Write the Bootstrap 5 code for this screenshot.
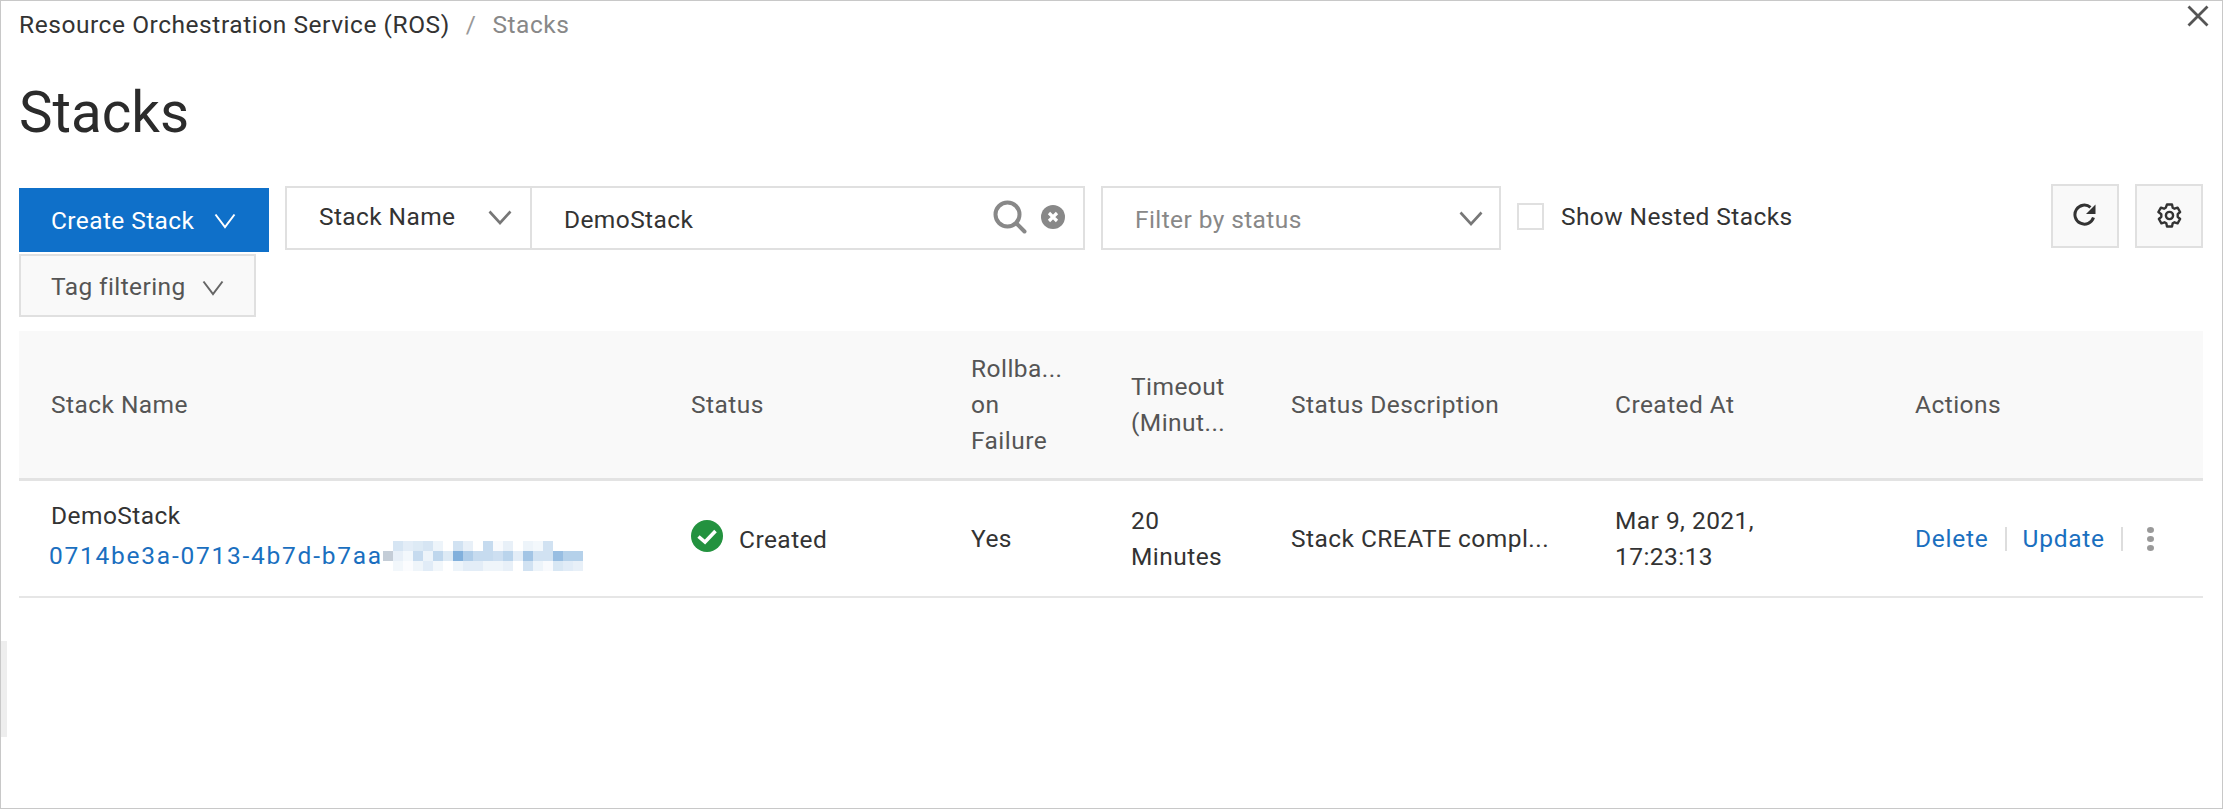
<!DOCTYPE html>
<html><head><meta charset="utf-8"><title>Stacks</title>
<link href="https://cdn.jsdelivr.net/npm/bootstrap@5.3.0/dist/css/bootstrap.min.css" rel="stylesheet">
<style>
html,body{height:100%;background:#fff}
body{font-family:Roboto,"Liberation Sans",sans-serif;font-size:24.5px;color:#333;letter-spacing:.4px}
.shell{height:809px;border:1px solid #c8c8c8;padding:0 19px 0 18px;position:relative;overflow:hidden}
.closer{position:absolute;right:13px;top:4px;line-height:0}
.handle{position:absolute;left:0;top:640px;width:6px;height:96px;background:#eee}
.crumbs{height:47px;margin:0;font-size:24.5px;line-height:47px;letter-spacing:.55px;--bs-breadcrumb-margin-bottom:0;--bs-breadcrumb-item-padding-x:16px}
.crumbs .breadcrumb-item+.breadcrumb-item::before{color:#999}
.crumbs .active{color:#888}
.ttl{font-size:56.5px;line-height:64px;font-weight:400;margin:33px 0 43px;color:#2b2b2b;letter-spacing:0}
.tools{height:143px}
.leftcol{width:250px}
.btnx{border-radius:0;font-size:24.500px;letter-spacing:.4px;display:flex;align-items:center;padding:2px 0 0 32px;gap:17px}
.btncreate{width:250px;height:64px;background:#0f70c9;border:0;color:#fff;margin-bottom:2px;gap:20px}
.btntag{width:237px;height:63px;background:#f9f9f9;border:2px solid #e0e0e0;color:#555;padding:4px 0 0 30px;gap:16px}
.sel{height:64px;border:2px solid #e0e0e0;background:#fff;display:flex;align-items:center}
.grp{width:800px;margin:-2px 0 0 16px}
.grp .nameb{width:245px;height:100%;border-right:2px solid #e0e0e0;padding-left:32px;display:flex;align-items:center;justify-content:space-between;padding-right:18px;padding-bottom:2px}
.grp .val{flex:1;padding-left:32px;padding-top:4px;color:#333}
.grp .ic{display:flex;gap:14px;margin-right:18px;align-items:center;padding-bottom:3px}
.fil{width:400px;margin:-2px 0 0 16px;padding:0 16px 0 32px;justify-content:space-between;color:#888}
.fil span{padding-top:4px}
.chk{margin:15px 0 0 16px;gap:17px;height:27px;align-self:flex-start}
.chk span+span{padding-top:2px}
.box{width:27px;height:27px;border:2px solid #e0e0e0;background:#fff;flex:none}
.sq{width:68px;height:64px;background:#f9f9f9;border:2px solid #e0e0e0;border-radius:0;padding:0 0 2px;display:flex;align-items:center;justify-content:center}
.sqs{margin:-4px 0 0 auto;gap:16px}
table.grid{table-layout:fixed;width:100%;margin:0;--bs-table-bg:transparent;color:#333}
.grid th,.grid td{padding:1px 16px 0 32px;vertical-align:middle;line-height:36px;font-weight:400;letter-spacing:.45px;border-bottom:2px solid #e6e6e6}
.grid thead th{background:#f9f9f9;height:148px;color:#555;border-bottom:3px solid #e3e3e3}
.grid tbody td{height:118px}
.grid tbody td.first{padding-top:0;padding-bottom:4px}
.c1{width:640px}.c2{width:280px}.c3{width:160px}.c4{width:160px}.c5{width:324px}.c6{width:300px}
.trunc{white-space:nowrap;overflow:hidden;text-overflow:ellipsis}
.lnk{color:#1a6fbf;text-decoration:none}
.uid{display:flex;margin:4px 0 0 -2px;align-items:center;height:36px;letter-spacing:1.75px}
.stat{display:flex;align-items:center;gap:16px}
.stat svg{margin-top:-5px}
.stat span{padding-top:3px}
.acts{display:flex;align-items:center}
.acts .lnk{letter-spacing:.75px}
.sep{width:2px;height:24px;background:#ddd;margin:0 16px}
.dots{width:8px;display:flex;flex-direction:column;gap:3px;margin-left:8px}
.dots i{display:block;width:7px;height:6px;border-radius:50%;background:#999}
</style></head><body>
<div class="shell">
<a class="closer" href="#" aria-label="Close"><svg width="22" height="22" viewBox="0 0 22 22"><path d="M1.500 1.500 20.500 20.500M20.500 1.500 1.500 20.500" stroke="#555" stroke-width="2.800" fill="none"/></svg></a>
<div class="handle"></div>
<nav><ol class="breadcrumb crumbs"><li class="breadcrumb-item"><a class="text-reset text-decoration-none" href="#">Resource Orchestration Service (ROS)</a></li><li class="breadcrumb-item active">Stacks</li></ol></nav>
<h1 class="ttl">Stacks</h1>
<div class="tools d-flex align-items-start">
<div class="leftcol">
<button class="btn btnx btncreate">Create Stack <svg width="22" height="16" viewBox="0 0 22 16"><path d="M1.500 1.500 11 14 20.500 1.500" stroke="#fff" stroke-width="2" fill="none"/></svg></button>
<button class="btn btnx btntag">Tag filtering <svg width="22" height="16" viewBox="0 0 22 16"><path d="M1.500 1.500 11 14 20.500 1.500" stroke="#666" stroke-width="2" fill="none"/></svg></button>
</div>
<div class="sel grp"><div class="nameb"><span>Stack Name</span><svg width="24" height="15" viewBox="0 0 24 15"><path d="M1.500 1.500 12 13 22.500 1.500" stroke="#777" stroke-width="2.600" fill="none"/></svg></div>
<div class="val">DemoStack</div>
<div class="ic"><svg width="34" height="34" viewBox="0 0 34 34"><circle cx="14.500" cy="14.500" r="12" stroke="#888" stroke-width="4" fill="none"/><path d="M24 24 31.500 31.500" stroke="#888" stroke-width="4" stroke-linecap="round"/></svg>
<svg width="24" height="24" viewBox="0 0 24 24"><circle cx="12" cy="12" r="12" fill="#888"/><path d="M8 8 16 16M16 8 8 16" stroke="#fff" stroke-width="3.200"/></svg></div></div>
<div class="sel fil"><span>Filter by status</span><svg width="24" height="15" viewBox="0 0 24 15"><path d="M1.500 1.500 12 13 22.500 1.500" stroke="#777" stroke-width="2.600" fill="none"/></svg></div>
<div class="chk d-flex align-items-center"><span class="box"></span><span>Show Nested Stacks</span></div>
<div class="sqs d-flex">
<button class="btn sq" aria-label="Refresh"><svg width="24" height="24" viewBox="0 0 24 24"><path d="M20.500 14.500A9.500 9.500 0 1 1 17.500 4.300" stroke="#333" stroke-width="3" fill="none"/><path d="M22.500 1.500V11H13z" fill="#333"/></svg></button>
<button class="btn sq" aria-label="Settings"><svg width="25" height="25" viewBox="0 0 25 25"><circle cx="12.500" cy="12.500" r="3.600" stroke="#333" stroke-width="2.400" fill="none"/><path d="M10 1.500h5l.7 3.200 1.800 1 3.100-1 2.500 4.300-2.400 2.200v2.600l2.400 2.200-2.500 4.300-3.100-1-1.800 1-.7 3.200h-5l-.7-3.200-1.800-1-3.100 1-2.500-4.300 2.400-2.200v-2.600L1.400 9l2.500-4.300 3.100 1 1.800-1z" stroke="#333" stroke-width="2.400" stroke-linejoin="round" fill="none"/></svg></button>
</div>
</div>
<table class="table grid"><colgroup><col class="c1"><col class="c2"><col class="c3"><col class="c4"><col class="c5"><col class="c6"><col></colgroup>
<thead><tr><th>Stack Name</th><th>Status</th><th>Rollba...<br>on<br>Failure</th><th>Timeout<br>(Minut...</th><th>Status Description</th><th>Created At</th><th>Actions</th></tr></thead>
<tbody><tr>
<td class="first"><div>DemoStack</div><a href="#" class="lnk uid">0714be3a-0713-4b7d-b7aa<svg width="200" height="30" viewBox="0 0 20 3" shape-rendering="crispEdges"><g fill="#1a6fbf">
<rect x="1" y="0" width="1" height="1" opacity=".18"/><rect x="2" y="0" width="1" height="1" opacity=".12"/><rect x="3" y="0" width="1" height="1" opacity=".15"/><rect x="4" y="0" width="1" height="1" opacity=".18"/><rect x="5" y="0" width="1" height="1" opacity=".08"/><rect x="7" y="0" width="1" height="1" opacity=".2"/><rect x="8" y="0" width="1" height="1" opacity=".1"/><rect x="10" y="0" width="1" height="1" opacity=".25"/><rect x="11" y="0" width="1" height="1" opacity=".03"/><rect x="12" y="0" width="1" height="1" opacity=".1"/><rect x="14" y="0" width="1" height="1" opacity=".08"/><rect x="15" y="0" width="1" height="1" opacity=".05"/><rect x="16" y="0" width="1" height="1" opacity=".2"/>
<rect x="0" y="1" width="1" height="1" fill="#8a9bb0" opacity=".5"/><rect x="1" y="1" width="1" height="1" opacity=".1"/><rect x="2" y="1" width="1" height="1" opacity=".05"/><rect x="3" y="1" width="1" height="1" opacity=".25"/><rect x="4" y="1" width="1" height="1" opacity=".08"/><rect x="5" y="1" width="1" height="1" opacity=".28"/><rect x="6" y="1" width="1" height="1" opacity=".15"/><rect x="7" y="1" width="1" height="1" opacity=".55"/><rect x="8" y="1" width="1" height="1" opacity=".35"/><rect x="9" y="1" width="1" height="1" opacity=".25"/><rect x="10" y="1" width="1" height="1" opacity=".25"/><rect x="11" y="1" width="1" height="1" opacity=".22"/><rect x="12" y="1" width="1" height="1" opacity=".3"/><rect x="13" y="1" width="1" height="1" opacity=".12"/><rect x="14" y="1" width="1" height="1" opacity=".4"/><rect x="15" y="1" width="1" height="1" opacity=".2"/><rect x="16" y="1" width="1" height="1" opacity=".2"/><rect x="17" y="1" width="1" height="1" opacity=".45"/><rect x="18" y="1" width="2" height="1" opacity=".32"/>
<rect x="1" y="2" width="1" height="1" opacity=".06"/><rect x="2" y="2" width="1" height="1" opacity=".02"/><rect x="3" y="2" width="1" height="1" opacity=".07"/><rect x="4" y="2" width="1" height="1" opacity=".13"/><rect x="5" y="2" width="1" height="1" opacity=".06"/><rect x="7" y="2" width="1" height="1" opacity=".08"/><rect x="8" y="2" width="2" height="1" opacity=".12"/><rect x="10" y="2" width="2" height="1" opacity=".07"/><rect x="12" y="2" width="1" height="1" opacity=".1"/><rect x="14" y="2" width="1" height="1" opacity=".2"/><rect x="15" y="2" width="1" height="1" opacity=".08"/><rect x="16" y="2" width="1" height="1" opacity=".03"/><rect x="17" y="2" width="1" height="1" opacity=".17"/><rect x="18" y="2" width="1" height="1" opacity=".13"/><rect x="19" y="2" width="1" height="1" opacity=".1"/></g></svg></a></td>
<td><div class="stat"><svg width="32" height="32" viewBox="0 0 32 32"><circle cx="16" cy="16" r="16" fill="#23923f"/><path d="M7.500 16.500 14 22 24.500 11" stroke="#fff" stroke-width="3.600" fill="none"/></svg><span>Created</span></div></td>
<td>Yes</td>
<td>20<br>Minutes</td>
<td><div class="trunc">Stack CREATE compl...</div></td>
<td>Mar 9, 2021,<br>17:23:13</td>
<td><div class="acts"><a href="#" class="lnk">Delete</a><span class="sep"></span><a href="#" class="lnk">Update</a><span class="sep"></span><span class="dots"><i></i><i></i><i></i></span></div></td>
</tr></tbody></table>
</div>
<script src="https://cdn.jsdelivr.net/npm/bootstrap@5.3.0/dist/js/bootstrap.bundle.min.js"></script>
</body></html>
